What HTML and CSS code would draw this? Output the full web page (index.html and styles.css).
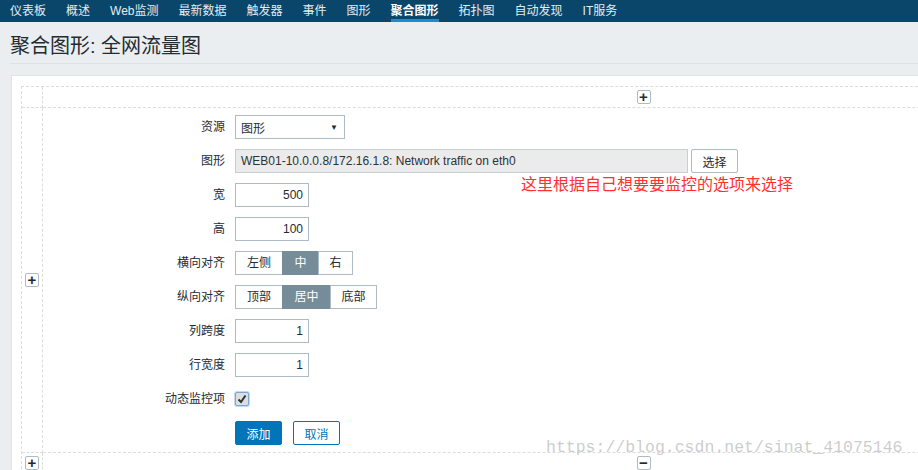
FILE: index.html
```html
<!DOCTYPE html>
<html lang="zh-CN">

<head>
    <meta charset="UTF-8">
    <title>聚合图形: 全网流量图</title>
    <link rel="stylesheet" href="styles.css">
</head>

<body>
    <!-- Top menu -->
    <ul class="top-nav">
        <li>仪表板</li>
        <li>概述</li>
        <li>Web监测</li>
        <li>最新数据</li>
        <li>触发器</li>
        <li>事件</li>
        <li>图形</li>
        <li class="selected">聚合图形</li>
        <li>拓扑图</li>
        <li>自动发现</li>
        <li>IT服务</li>
    </ul>

    <div class="header-title">
        <h1>聚合图形: 全网流量图</h1>
    </div>

    <div class="panel">
        <div class="screen-grid">
            <div class="cell"></div>
            <div class="cell cell-center"><span class="icon-btn">+</span></div>

            <div class="cell cell-center"><span class="icon-btn">+</span></div>
            <div class="cell cell-main">
                <div class="form-grid">
                    <label>资源</label>
                    <div class="select-box"><span>图形</span><span class="arrow">▼</span></div>

                    <label>图形</label>
                    <div class="row-inline">
                        <div class="input input-readonly">WEB01-10.0.0.8/172.16.1.8: Network traffic on eth0</div>
                        <button class="btn-alt">选择</button>
                    </div>

                    <label>宽</label>
                    <div class="input input-num">500</div>

                    <label>高</label>
                    <div class="input input-num">100</div>

                    <label>横向对齐</label>
                    <div class="segmented">
                        <span class="w47">左侧</span><span class="on w36">中</span><span class="w34">右</span>
                    </div>

                    <label>纵向对齐</label>
                    <div class="segmented">
                        <span class="w47">顶部</span><span class="on w48">居中</span><span class="w46">底部</span>
                    </div>

                    <label>列跨度</label>
                    <div class="input input-num">1</div>

                    <label>行宽度</label>
                    <div class="input input-num">1</div>

                    <label>动态监控项</label>
                    <div class="check-wrap">
                        <span class="checkbox">
                            <svg width="10" height="10" viewBox="0 0 10 10"><path d="M1.5 5.5 L4 8 L8.5 1.5" fill="none" stroke="#2b3338" stroke-width="2"/></svg>
                        </span>
                    </div>

                    <span></span>
                    <div class="row-inline">
                        <button class="btn-main">添加</button>
                        <button class="btn-outline">取消</button>
                    </div>
                </div>
            </div>

            <div class="cell cell-center"><span class="icon-btn">+</span></div>
            <div class="cell cell-center"><span class="icon-btn minus">−</span></div>
        </div>
    </div>

    <!-- annotation and watermark drawn over the page -->
    <div class="note">这里根据自己想要要监控的选项来选择</div>
    <div class="watermark">https://blog.csdn.net/sinat_41075146</div>
</body>

</html>
```

FILE: styles.css
```css
body {
    margin: 0;
    background-color: #ebeef0;
    font-family: Arial, "Liberation Sans", "Noto Sans CJK SC", sans-serif;
    font-size: 12px;
    color: #1f2c33;
    overflow: hidden;
    width: 918px;
    height: 470px;
}

.top-nav {
    display: flex;
    margin: 0;
    padding: 0;
    list-style: none;
    height: 22px;
    background-color: #0a466a;
}

.top-nav li {
    margin: 0 10px;
    line-height: 22px;
    color: #e4ecf1;
    white-space: nowrap;
}

.top-nav li.selected {
    color: #ffffff;
    font-weight: bold;
    box-shadow: inset 0 -3px 0 #1f8ad0;
}

.header-title {
    margin-left: 10px;
    padding-top: 7px;
    border-bottom: 1px solid #dde2e6;
}

.header-title h1 {
    margin: 0;
    font-size: 20px;
    font-weight: normal;
    line-height: 34px;
    color: #1f2c33;
}

.panel {
    margin: 11px 0 0 11px;
    padding: 10px 0 0 9px;
    background-color: #ffffff;
    border-top: 1px solid #dfe4e7;
    border-left: 1px solid #dfe4e7;
    height: 400px;
    overflow: hidden;
}

.screen-grid {
    display: grid;
    grid-template-columns: 21px 1202px;
    grid-template-rows: 21px auto 21px;
    border-top: 1px dashed #dcdcdc;
    border-left: 1px dashed #dcdcdc;
}

.cell {
    border-right: 1px dashed #dcdcdc;
    border-bottom: 1px dashed #dcdcdc;
}

.cell-center {
    display: flex;
    align-items: center;
    justify-content: center;
}

.icon-btn {
    display: flex;
    align-items: center;
    justify-content: center;
    width: 12px;
    height: 12px;
    border: 1px solid #acbbc4;
    border-radius: 2px;
    background-color: #ffffff;
    color: #1f2c33;
    font-size: 15px;
    font-weight: bold;
    line-height: 12px;
}

.cell-main {
    padding: 7px 0 7px 0;
}

.form-grid {
    display: grid;
    grid-template-columns: 182px auto;
    column-gap: 10px;
    row-gap: 10px;
    align-items: center;
}

.form-grid label {
    text-align: right;
    line-height: 24px;
}

.row-inline {
    display: flex;
    align-items: center;
}

.input {
    box-sizing: border-box;
    height: 24px;
    line-height: 22px;
    border: 1px solid #acbbc4;
    padding: 0 5px;
    background-color: #ffffff;
}

.input-num {
    width: 74px;
    text-align: right;
}

.input-readonly {
    width: 453px;
    background-color: #ebebeb;
    border-color: #c8cfd3;
    color: #2b3338;
}

.select-box {
    box-sizing: border-box;
    display: flex;
    justify-content: space-between;
    align-items: center;
    width: 110px;
    height: 24px;
    border: 1px solid #acbbc4;
    padding: 0 6px 0 5px;
}

.select-box .arrow {
    font-size: 8px;
    color: #1f2c33;
}

button {
    font-family: Arial, "Liberation Sans", "Noto Sans CJK SC", sans-serif;
    font-size: 12px;
    box-sizing: border-box;
    height: 24px;
    width: 47px;
    padding: 0;
    border-radius: 2px;
    cursor: pointer;
}

.btn-alt {
    margin-left: 3px;
    background-color: #ffffff;
    border: 1px solid #acbbc4;
    color: #1f2c33;
}

.btn-main {
    background-color: #0275b8;
    border: 1px solid #0275b8;
    color: #ffffff;
}

.btn-outline {
    margin-left: 11px;
    background-color: #ffffff;
    border: 1px solid #0275b8;
    color: #0275b8;
}

.segmented {
    display: flex;
    height: 24px;
}

.segmented span {
    box-sizing: border-box;
    height: 24px;
    line-height: 22px;
    text-align: center;
    border: 1px solid #acbbc4;
    margin-left: -1px;
    background-color: #ffffff;
}

.segmented span:first-child {
    margin-left: 0;
}

.segmented span.on {
    background-color: #768d99;
    border-color: #768d99;
    color: #ffffff;
}

.w34 { width: 35px; }
.w36 { width: 37px; }
.w46 { width: 47px; }
.w47 { width: 48px; }
.w48 { width: 49px; }

.check-wrap {
    height: 24px;
    display: flex;
    align-items: center;
}

.checkbox {
    display: flex;
    align-items: center;
    justify-content: center;
    width: 12px;
    height: 12px;
    background-color: #dedede;
    border: 1px solid #7aa6dc;
    box-shadow: 0 0 0 1px #c4d9f2;
    border-radius: 2px;
}

.note {
    position: absolute;
    left: 521px;
    top: 173px;
    font-size: 16px;
    line-height: 20px;
    color: #ff3030;
    font-family: "Noto Sans CJK SC", sans-serif;
}

.watermark {
    position: absolute;
    left: 546px;
    top: 438px;
    font-family: "Liberation Mono", monospace;
    font-size: 16.5px;
    line-height: 20px;
    color: rgba(170, 170, 170, 0.6);
}
```
